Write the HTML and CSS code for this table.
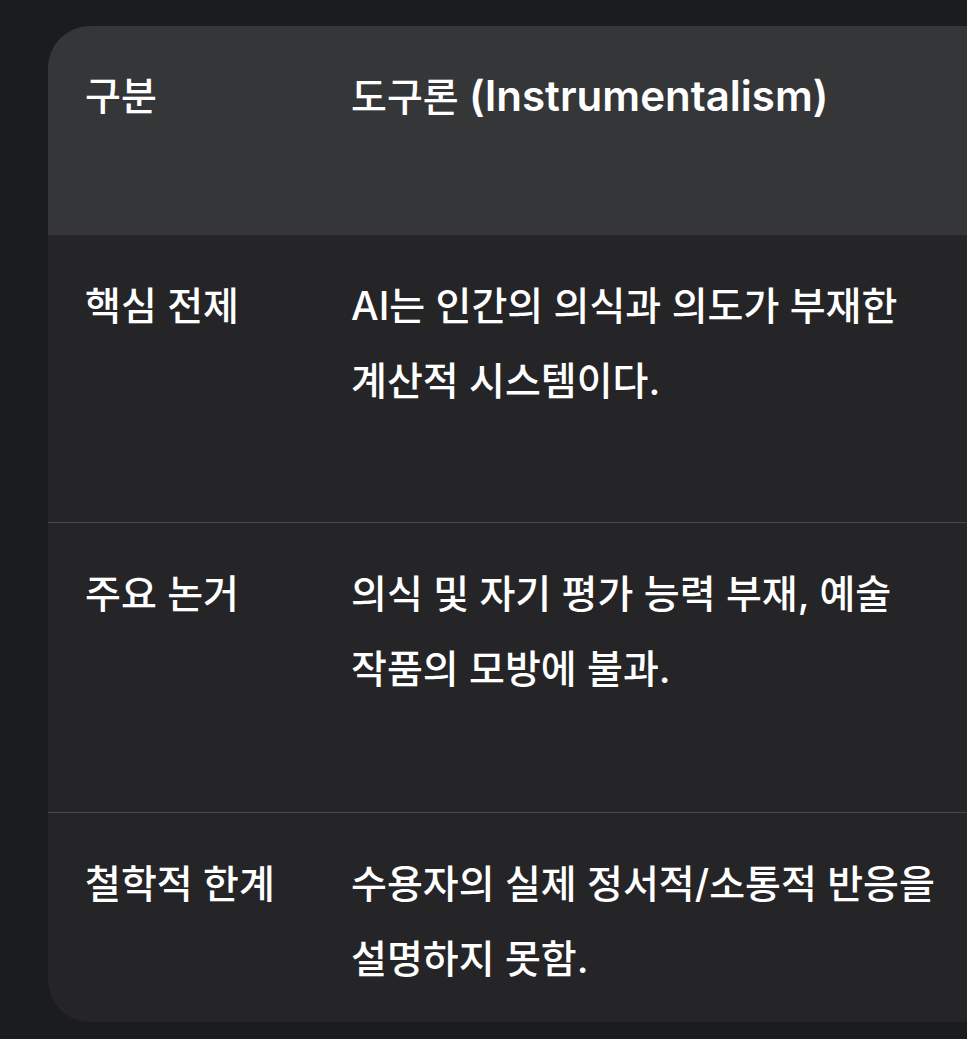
FILE: index.html
```html
<!DOCTYPE html>
<html lang="ko">
<head>
<meta charset="utf-8">
<title>도구론 비교</title>
<link rel="stylesheet" href="styles.css">
</head>
<body>
<div class="page">
  <div class="card">
    <table class="compare">
      <thead>
        <tr class="row-head">
          <th class="col-label">구분</th>
          <th class="col-desc">도구론 <span class="latin">(Instrumentalism)</span></th>
          <th class="col-rest"></th>
        </tr>
      </thead>
      <tbody>
        <tr class="row-body row-first">
          <td class="col-label">핵심 전제</td>
          <td class="col-desc">AI는 인간의 의식과 의도가 부재한 계산적 시스템이다.</td>
          <td class="col-rest"></td>
        </tr>
        <tr class="row-body row-mid">
          <td class="col-label">주요 논거</td>
          <td class="col-desc">의식 및 자기 평가 능력 부재, 예술 작품의 모방에 불과.</td>
          <td class="col-rest"></td>
        </tr>
        <tr class="row-body row-last">
          <td class="col-label">철학적 한계</td>
          <td class="col-desc">수용자의 실제 정서적/소통적 반응을 설명하지 못함.</td>
          <td class="col-rest"></td>
        </tr>
      </tbody>
    </table>
  </div>
</div>
</body>
</html>
```

FILE: styles.css
```css
html, body {
  margin: 0;
  padding: 0;
  height: 100%;
  overflow: hidden;
  background: #1b1c1e;
}

.page {
  padding: 26px 0 0 48px;
}

.card {
  width: 1200px;
  border-radius: 42px;
  overflow: hidden;
  background: #252527;
}

.compare {
  width: 100%;
  border-collapse: separate;
  border-spacing: 0;
  font-family: "Inter", "Noto Sans CJK KR", sans-serif;
  color: #ffffff;
  word-break: keep-all;
}

.compare th,
.compare td {
  text-align: left;
  vertical-align: top;
  padding: 33px 37px 20px;
  font-size: 39px;
  line-height: 75px;
  font-weight: 500;
}

.latin {
  font-size: 42px;
  font-weight: 600;
}

.col-label {
  width: 192px;
}

.col-desc {
  width: 620px;
}

.row-head {
  background: #353638;
  height: 209px;
}

.row-head th {
  padding-top: 32px;
}

.row-first {
  height: 287px;
}

.row-mid {
  height: 290px;
}

.row-last {
  height: 210px;
}

.row-mid td,
.row-last td {
  border-top: 1px solid #48494b;
}
```
